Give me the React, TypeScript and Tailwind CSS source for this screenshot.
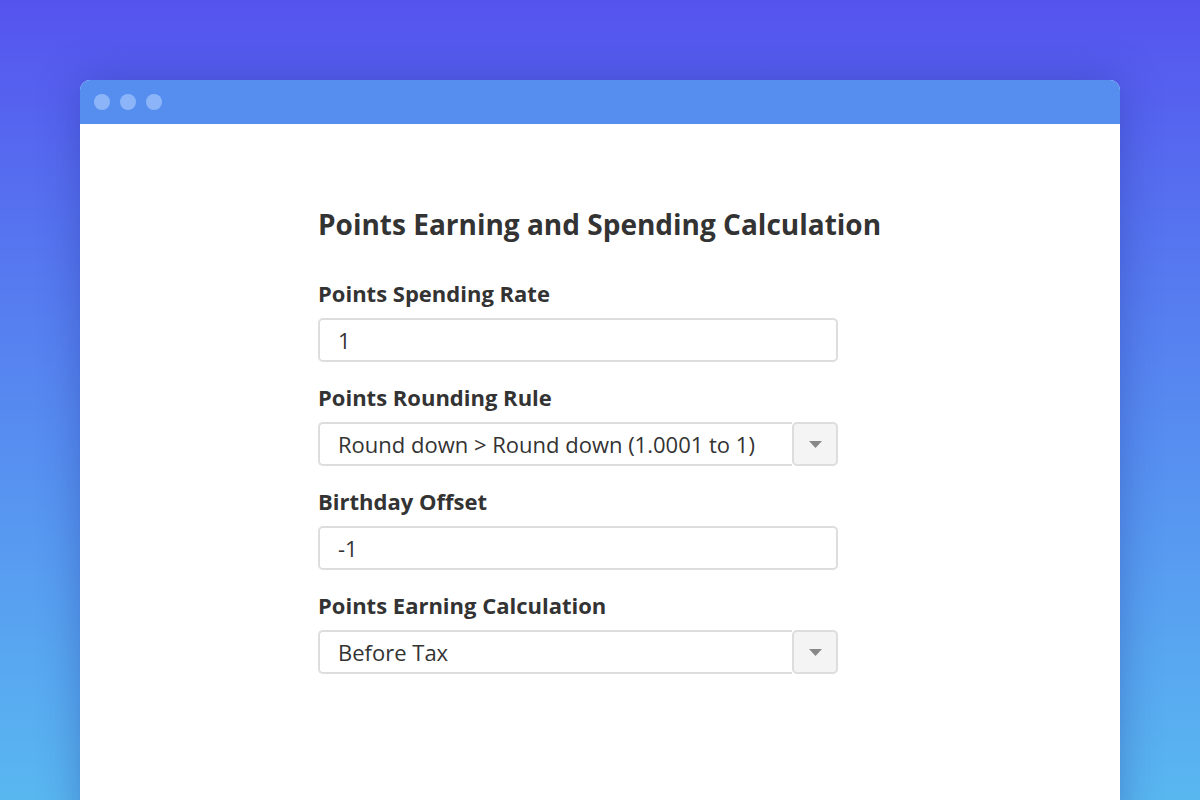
import React from "react";

function Caret() {
  return (
    <svg width="13" height="7" viewBox="0 0 13 7">
      <polygon points="0,0 13,0 6.5,7" fill="#888888" />
    </svg>
  );
}

function TextInput({ value }: { value: string }) {
  return (
    <div className="w-[520px] h-[44px] rounded-[5px] border-2 border-[#dddddd] bg-white flex items-center px-[18px] text-[22px] text-[#333333]">
      {value}
    </div>
  );
}

function SelectInput({ value }: { value: string }) {
  return (
    <div className="w-[520px] h-[44px] flex items-stretch text-[22px] text-[#333333]">
      <div className="flex-1 flex items-center px-[18px] rounded-l-[5px] border-2 border-r-0 border-[#dddddd] bg-white">
        {value}
      </div>
      <div className="w-[46px] rounded-[5px] bg-[#f4f4f4] border-2 border-[#dddddd] flex items-center justify-center">
        <Caret />
      </div>
    </div>
  );
}

function Field({ label, children }: { label: string; children: React.ReactNode }) {
  return (
    <div className="flex flex-col">
      <div className="text-[22px] font-bold text-[#333333] leading-[30px] mb-[10px]">{label}</div>
      {children}
    </div>
  );
}

export default function App() {
  return (
    <div
      className="w-[1200px] h-[800px] overflow-hidden bg-gradient-to-b from-[#5553ee] to-[#59b7f0] pt-[80px] px-[80px]"
      style={{ fontFamily: '"Open Sans", sans-serif' }}
    >
      <div className="w-[1040px] h-[760px] rounded-t-[10px] overflow-hidden bg-white shadow-[0_0_40px_rgba(30,40,140,0.35)]">
        <div className="h-[44px] bg-[#558eee] flex items-center gap-[10px] px-[14px]">
          <div className="w-[16px] h-[16px] rounded-full bg-[#8cb5f9]" />
          <div className="w-[16px] h-[16px] rounded-full bg-[#8cb5f9]" />
          <div className="w-[16px] h-[16px] rounded-full bg-[#8cb5f9]" />
        </div>
        <div className="pl-[238px] pt-[81px] flex flex-col">
          <h1 className="text-[28px] font-bold text-[#333333] leading-[38px] mb-[35px]">
            Points Earning and Spending Calculation
          </h1>
          <div className="flex flex-col gap-[20px]">
            <Field label="Points Spending Rate">
              <TextInput value="1" />
            </Field>
            <Field label="Points Rounding Rule">
              <SelectInput value="Round down > Round down (1.0001 to 1)" />
            </Field>
            <Field label="Birthday Offset">
              <TextInput value="-1" />
            </Field>
            <Field label="Points Earning Calculation">
              <SelectInput value="Before Tax" />
            </Field>
          </div>
        </div>
      </div>
    </div>
  );
}
